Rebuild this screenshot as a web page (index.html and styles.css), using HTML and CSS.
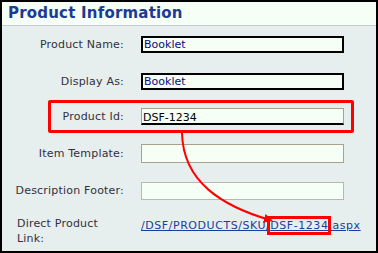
FILE: index.html
```html
<!DOCTYPE html>
<html>
<head>
    <title>Product Information</title>
    <meta name="viewport" content="width=device-width, initial-scale=1">
    <link rel="stylesheet" href="styles.css">
</head>
<body>
    <div class="panel">
        <div class="panel-header">
            <h1>Product Information</h1>
        </div>
        <div class="panel-body">
            <div class="form-row">
                <label for="name">Product Name:</label>
                <input type="text" id="name" class="field field-dark" value="Booklet">
            </div>
            <div class="form-row">
                <label for="display">Display As:</label>
                <input type="text" id="display" class="field field-dark" value="Booklet">
            </div>
            <div class="form-row row-id">
                <label for="pid">Product Id:</label>
                <input type="text" id="pid" class="field field-id" value="DSF-1234">
            </div>
            <div class="form-row">
                <label for="template">Item Template:</label>
                <input type="text" id="template" class="field field-light">
            </div>
            <div class="form-row">
                <label for="footer">Description Footer:</label>
                <input type="text" id="footer" class="field field-light field-footer">
            </div>
            <div class="form-row row-link">
                <label class="label-left">Direct Product<br>Link:</label>
                <a href="#" class="product-link">/DSF/PRODUCTS/SKU/<span class="callout">DSF-1234</span>.aspx</a>
            </div>
        </div>

        <!-- annotation overlay -->
        <div class="highlight"></div>
        <svg class="arrow" width="378" height="253" viewBox="0 0 378 253">
            <defs>
                <marker id="head" markerWidth="9" markerHeight="9" refX="6" refY="4.5" orient="auto" markerUnits="userSpaceOnUse">
                    <path d="M0,0 L9,4.5 L0,9 Z" fill="#ff0000"/>
                </marker>
            </defs>
            <path d="M182,133 C183,182 222,206 270,220" fill="none" stroke="#ff0000" stroke-width="2" marker-end="url(#head)"/>
        </svg>
    </div>
</body>
</html>
```

FILE: styles.css
```css
body {
    margin: 0;
    font-family: "DejaVu Sans", Verdana, sans-serif;
    font-size: 11px;
}
.panel {
    position: relative;
    width: 378px;
    height: 253px;
    box-sizing: border-box;
    border: 2px solid #000;
    background-color: #e6eeee;
    overflow: hidden;
}
.panel-header {
    height: 23px;
    background-color: #f5fff5;
    border-bottom: 1px solid #c6cbd3;
    padding-left: 6px;
}
.panel-header h1 {
    margin: 0;
    font-size: 15px;
    line-height: 22px;
    letter-spacing: 0.2px;
    font-weight: bold;
    color: #1d3a94;
}
.form-row {
    display: grid;
    grid-template-columns: 122px 203px;
    column-gap: 17px;
    align-items: center;
    height: 37px;
}
.form-row label {
    text-align: right;
    letter-spacing: 0.2px;
    color: #33303c;
}
.field {
    height: 17px;
    box-sizing: border-box;
    padding: 0 1px;
    background-color: #f5fff5;
    font-family: "DejaVu Sans", Verdana, sans-serif;
    font-size: 11px;
    color: #0b0b7a;
    outline: none;
}
.field-dark {
    border: 2px solid #000;
}
.field-id {
    border: 1px solid #a8a28a;
    border-bottom: 2px solid #000;
    padding-top: 3px;
    color: #000;
}
.field-light {
    height: 19px;
    border: 1px solid #a8a28a;
}
.field-footer {
    height: 18px;
    border-color: #b8b8b0;
}
.row-id {
    margin-top: -2px;
}
.row-link {
    align-items: start;
}
.label-left {
    text-align: left !important;
    padding-left: 15px;
    padding-top: 7px;
    line-height: 15px;
}
.product-link {
    padding-top: 9px;
    line-height: 16px;
    letter-spacing: 0.55px;
    color: #1a3d9e;
    white-space: nowrap;
}
.callout {
    outline: 3px solid #ff0000;
    outline-offset: 0;
}
.highlight {
    position: absolute;
    left: 46px;
    top: 98px;
    width: 306px;
    height: 33px;
    box-sizing: border-box;
    border: 3px solid #ff0000;
    border-radius: 2px;
}
.arrow {
    position: absolute;
    left: -2px;
    top: -2px;
    pointer-events: none;
}
```
